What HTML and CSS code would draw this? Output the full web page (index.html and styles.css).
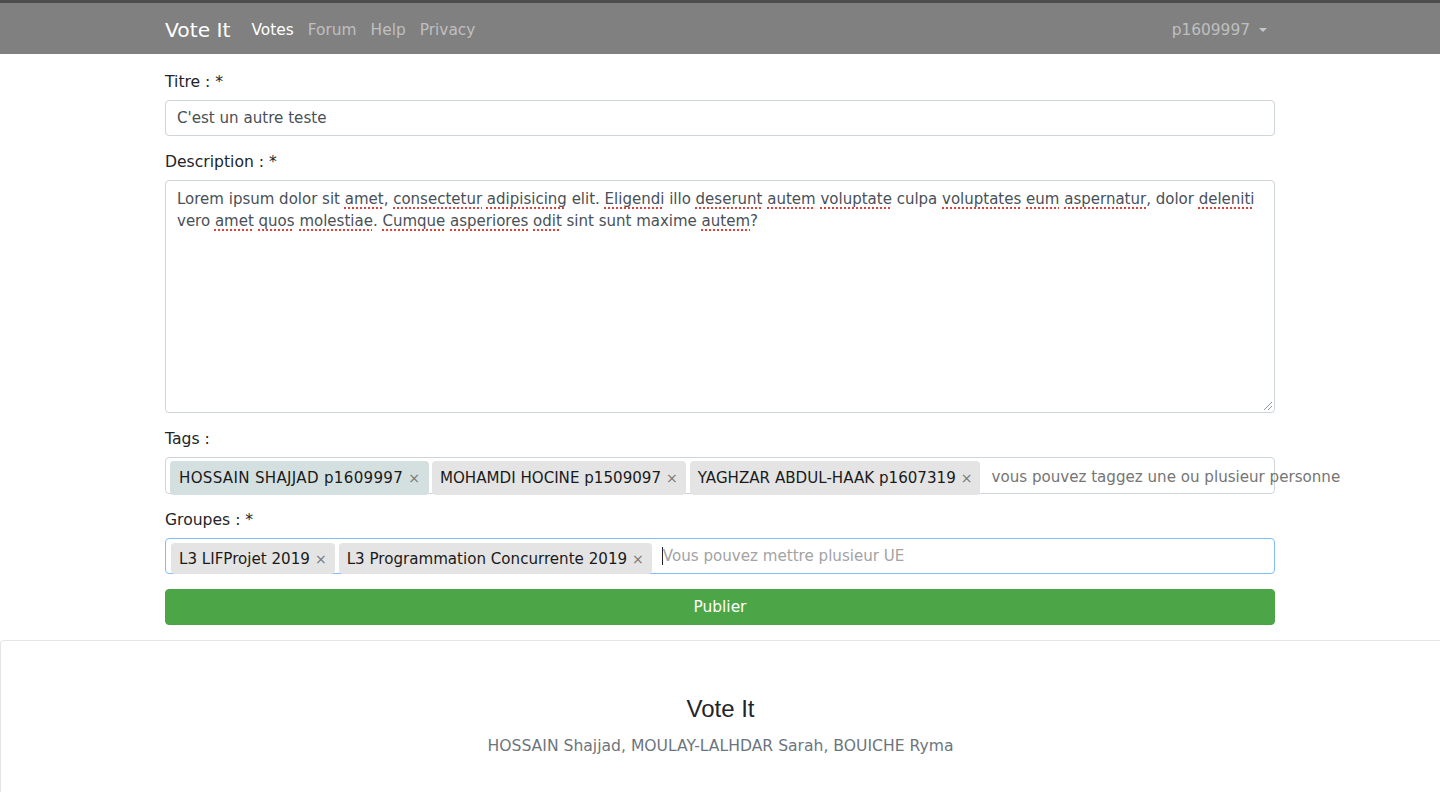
FILE: index.html
```html
<!DOCTYPE html>
<html lang="fr">
<head>
<meta charset="utf-8">
<title>Vote It</title>
<link rel="stylesheet" href="styles.css">
</head>
<body>
<nav class="navbar">
  <div class="nav-inner">
    <a class="brand">Vote It</a>
    <ul class="nav-links">
      <li><a class="active">Votes</a></li>
      <li><a>Forum</a></li>
      <li><a>Help</a></li>
      <li><a>Privacy</a></li>
    </ul>
    <div class="user">p1609997 <span class="caret"></span></div>
  </div>
</nav>

<main class="container">
  <div class="group">
    <label class="lbl">Titre : *</label>
    <div class="input">C'est un autre teste</div>
  </div>
  <div class="group">
    <label class="lbl">Description : *</label>
    <div class="textarea">Lorem ipsum dolor sit <span class="sp">amet</span>, <span class="sp">consectetur</span> <span class="sp">adipisicing</span> elit. <span class="sp">Eligendi</span> illo <span class="sp">deserunt</span> <span class="sp">autem</span> <span class="sp">voluptate</span> culpa <span class="sp">voluptates</span> <span class="sp">eum</span> <span class="sp">aspernatur</span>, dolor <span class="sp">deleniti</span> vero <span class="sp">amet</span> <span class="sp">quos</span> <span class="sp">molestiae</span>. <span class="sp">Cumque</span> <span class="sp">asperiores</span> <span class="sp">odit</span> sint sunt maxime <span class="sp">autem</span>?<span class="grip"></span></div>
  </div>
  <div class="group">
    <label class="lbl">Tags :</label>
    <div class="tagbox tags">
      <span class="chip hl"><span class="wide">HOSSAIN SHAJJAD p1609997</span><span class="x">×</span></span>
      <span class="chip">MOHAMDI HOCINE p1509097<span class="x">×</span></span>
      <span class="chip">YAGHZAR ABDUL-HAAK p1607319<span class="x">×</span></span>
      <span class="ph ph1">vous pouvez taggez une ou plusieur personne</span>
    </div>
  </div>
  <div class="group">
    <label class="lbl">Groupes : *</label>
    <div class="tagbox groups">
      <span class="chip">L3 LIFProjet 2019<span class="x">×</span></span>
      <span class="chip">L3 Programmation Concurrente 2019<span class="x">×</span></span>
      <span class="ph ph2"><span class="cursor"></span>Vous pouvez mettre plusieur UE</span>
    </div>
  </div>
  <button class="btn">Publier</button>
</main>

<footer class="footer">
  <h3 class="f-title">Vote It</h3>
  <p class="f-names">HOSSAIN Shajjad, MOULAY-LALHDAR Sarah, BOUICHE Ryma</p>
</footer>
</body>
</html>
```

FILE: styles.css
```css
* { box-sizing: border-box; }
html, body { margin: 0; padding: 0; }
body {
  font-family: "DejaVu Sans", Verdana, sans-serif;
  font-size: 15.6px;
  color: #212529;
  background: #fff;
  height: 792px;
  overflow: hidden;
}

.navbar {
  background: #808080;
  border-top: 3px solid #4d4d4d;
  height: 54px;
}
.nav-inner {
  width: 1110px;
  margin: 0 auto;
  height: 51px;
  padding-top: 2px;
  display: flex;
  align-items: center;
}
.brand {
  color: #fff;
  font-size: 20.3px;
  margin-right: 21px;
  line-height: 30px;
}
.nav-links {
  list-style: none;
  margin: 0;
  padding: 0;
  display: flex;
  gap: 14px;
}
.nav-links a {
  color: rgba(255,255,255,0.5);
  font-size: 15.4px;
  line-height: 22px;
}
.nav-links a.active { color: #fff; }
.user {
  margin-left: auto;
  margin-right: 8px;
  color: rgba(255,255,255,0.5);
  font-size: 15.4px;
  display: flex;
  align-items: center;
}
.caret {
  display: inline-block;
  margin-left: 9px;
  width: 0;
  height: 0;
  border-left: 4px solid transparent;
  border-right: 4px solid transparent;
  border-top: 4px solid rgba(255,255,255,0.55);
}

.container {
  width: 1110px;
  margin: 17px auto 0;
}
.group { margin-bottom: 15px; }
.lbl {
  display: block;
  line-height: 22px;
  margin-bottom: 7px;
  color: #212529;
}
.input, .textarea {
  border: 1px solid #ced4da;
  border-radius: 4px;
  padding: 6px 11px;
  color: #495057;
  line-height: 22px;
  font-size: 15.1px;
}
.input { height: 36px; }
.textarea {
  height: 233px;
  padding-top: 7px;
  padding-right: 6px;
  font-size: 15px;
  position: relative;
}
.sp {
  text-decoration: underline dotted #e0403a;
  text-decoration-thickness: 2px;
  text-underline-offset: 3px;
}
.grip {
  position: absolute;
  right: 2px;
  bottom: 2px;
  width: 8px;
  height: 8px;
  background: linear-gradient(135deg, transparent 45%, #999 45%, #999 55%, transparent 55%, transparent 70%, #999 70%, #999 80%, transparent 80%);
}

.tagbox {
  border: 1px solid #ced4da;
  border-radius: 4px;
  display: flex;
  align-items: flex-start;
  white-space: nowrap;
  color: #222;
  font-size: 15.1px;
}
.tags { height: 37px; padding: 3px 0 0 4px; }
.tags .chip { height: 34px; margin-right: 3px; }
.tags .chip:nth-child(2) { margin-right: 4px; }
.groups {
  height: 36px;
  padding: 4px 0 0 5px;
  gap: 4px;
  border-color: #80bdff;
}
.groups .chip { height: 31px; }
.chip {
  background: #e4e4e4;
  border-radius: 4px;
  padding: 0 8px 0 8px;
  display: inline-flex;
  align-items: center;
  color: #1a1a1a;
}
.chip.hl { background: #d4e0e0; padding-left: 9px; padding-right: 9px; }
.wide { letter-spacing: 0.3px; }
.x {
  color: #777;
  margin-left: 5px;
  font-size: 14px;
}
.ph {
  color: #757575;
  line-height: 32px;
}
.ph1 { margin-left: 8px; }
.ph2 { margin-left: 6px; color: #a3a3a3; line-height: 26px; display: flex; align-items: center; }
.cursor {
  display: inline-block;
  width: 1px;
  height: 18px;
  background: #222;
}

.btn {
  display: block;
  width: 100%;
  height: 36px;
  background: #4ca647;
  border: 1px solid #4ca647;
  border-radius: 4px;
  color: #fff;
  font-family: "DejaVu Sans", Verdana, sans-serif;
  font-size: 15.4px;
}

.footer {
  margin-top: 15px;
  border: 1px solid #e5e5e5;
  border-right: none;
  border-radius: 4px 0 0 0;
  text-align: center;
  padding-top: 52px;
  height: 200px;
}
.f-title {
  font-family: "Liberation Sans", Arial, sans-serif;
  font-weight: normal;
  font-size: 24px;
  margin: 0;
  line-height: 32px;
  color: #212529;
}
.f-names {
  margin: 10px 0 0;
  color: #6c757d;
  font-size: 15.6px;
  line-height: 22px;
}
```
